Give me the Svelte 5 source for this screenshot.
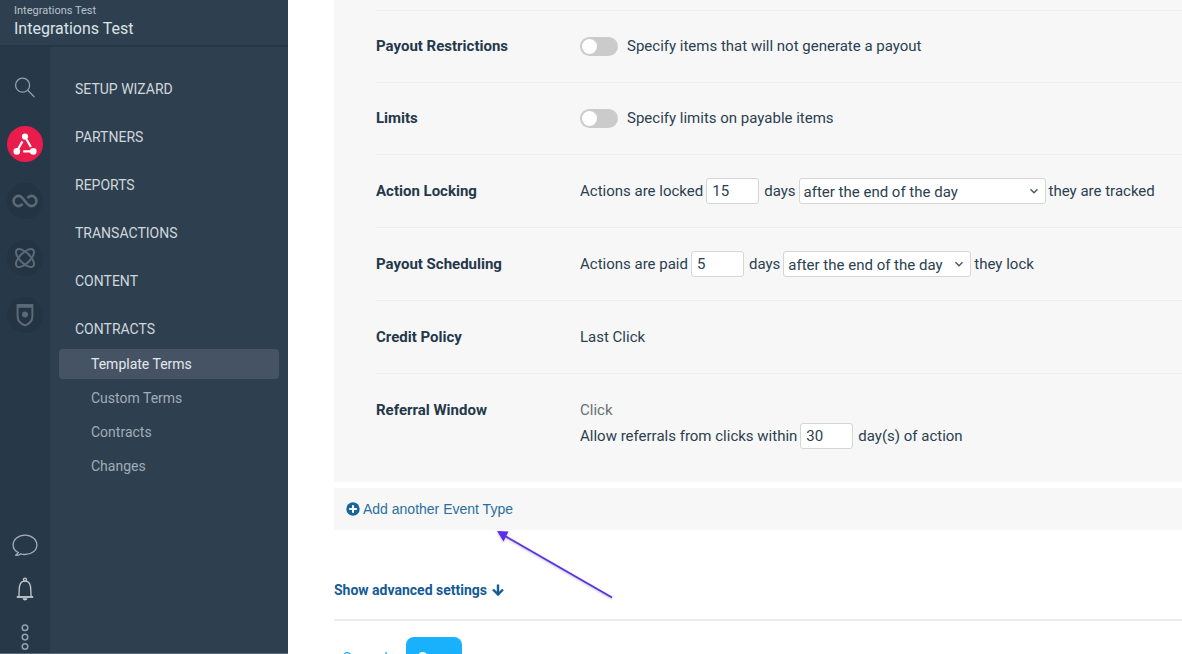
<script>
  const menu = ["Setup Wizard", "Partners", "Reports", "Transactions", "Content", "Contracts"];
  const submenu = ["Template Terms", "Custom Terms", "Contracts", "Changes"];
  const timing = ["after the end of the day", "after the end of the month"];

  let current = $state("Template Terms");
  let restrictPayout = $state(false);
  let limitItems = $state(false);
  let lockDays = $state("15");
  let lockFrom = $state(timing[0]);
  let payDays = $state("5");
  let payFrom = $state(timing[0]);
  let clickDays = $state("30");
</script>

{#snippet chevron()}
  <svg class="chevron" viewBox="0 0 10 10" aria-hidden="true"><path d="M1.5 3.2 5 6.8l3.5-3.6" /></svg>
{/snippet}

<div class="app">
  <aside class="sidebar">
    <header class="account">
      <small>Integrations Test</small>
      <strong>Integrations Test</strong>
    </header>

    <div class="sidebar-body">
      <div class="rail">
        <button aria-label="Search">
          <svg width="22" height="22" viewBox="0 0 22 22" fill="none" stroke="#94a2ae" stroke-width="1.3">
            <circle cx="8.6" cy="9.2" r="7" />
            <path d="m13.7 14.3 6.8 6.8" />
          </svg>
        </button>
        <button class="round active" aria-label="Performance">
          <svg width="36" height="36" viewBox="0 0 36 36" fill="#fff" stroke="#fff" stroke-width="2.2">
            <g stroke="none">
              <circle cx="18" cy="10.6" r="3.1" />
              <circle cx="9.8" cy="25.4" r="3.3" />
              <circle cx="26.3" cy="25.4" r="3.3" />
            </g>
            <path d="m15.4 15.4-4.4 7.8M19.3 13l4.6 8M16.2 25.4H25" />
          </svg>
        </button>
        <button class="round" aria-label="Optimize">
          <svg width="26" height="14" viewBox="0 0 26 14" fill="none" stroke="#5a6a78" stroke-width="2.6">
            <path d="M10.6 9.9C9.200 11.500 8.200 12.100 6.700 12.100a5.100 5.100 0 0 1 0-10.200c5.200 0 7.200 10.200 12.600 10.200a5.100 5.100 0 0 0 0-10.200c-1.700 0-2.700.7-3.900 2.100" />
          </svg>
        </button>
        <button class="round" aria-label="Discover">
          <svg width="22" height="22" viewBox="0 0 22 22" fill="none" stroke="#5a6a78" stroke-width="2">
            <ellipse cx="11" cy="11" rx="11.600" ry="5.200" transform="rotate(45 11 11)" />
            <ellipse cx="11" cy="11" rx="11.600" ry="5.200" transform="rotate(-45 11 11)" />
          </svg>
        </button>
        <button class="round" aria-label="Protect">
          <svg width="18" height="24" viewBox="0 0 18 24" fill="none" stroke="#5a6a78" stroke-width="2">
            <path d="M1.6 2.2h14.8v11c0 4.400-3.600 7.800-7.400 9.200-3.800-1.400-7.400-4.800-7.400-9.200z" />
            <path d="M1 3h16" stroke-width="3.500" />
            <circle cx="9" cy="11.500" r="3" fill="#5a6a78" stroke="none" />
          </svg>
        </button>

        <div class="rail-bottom">
          <button aria-label="Messages">
            <svg width="26" height="24" viewBox="0 0 26 24" fill="none" stroke="#a3adb9" stroke-width="1.300">
              <path d="M7 19.800C3.500 18.300 1.100 15.300 1.100 11.900c0-5.500 5.300-9.800 11.900-9.800s11.900 4.300 11.900 9.800S19.600 21.500 13 21.500c-1.600 0-3.100-.2-4.500-.6-1.500 1.200-3.500 1.700-5.200 1.500 1.500-.6 2.400-1.500 2.500-3.200" />
            </svg>
          </button>
          <button aria-label="Notifications">
            <svg width="18" height="24" viewBox="0 0 18 24" fill="none" stroke="#c3cad2" stroke-width="1.300">
              <circle cx="9" cy="2.600" r="1.500" />
              <path d="M2.800 19.500c.5-2.500.1-7.500.8-10.500C4.200 6 6.300 4.200 9 4.200s4.800 1.800 5.400 4.800c.7 3 .3 8 .8 10.500" />
              <path d="M.8 20h16.400" stroke-width="1.800" />
              <path d="M6.500 21.200h5c-.4 1.500-1.200 2.200-2.500 2.200s-2.100-.7-2.500-2.200z" fill="#c3cad2" stroke="none" />
            </svg>
          </button>
          <button aria-label="More">
            <svg width="10" height="32" viewBox="0 0 10 32" fill="none" stroke="#94a2b2" stroke-width="1.500">
              <circle cx="5" cy="6.700" r="2.800" />
              <circle cx="5" cy="16.100" r="2.800" />
              <circle cx="5" cy="25.500" r="2.800" />
            </svg>
          </button>
        </div>
      </div>

      <nav class="menu">
        {#each menu as item}
          <a class="menu-item" href="#menu">{item}</a>
        {/each}
        <div class="submenu">
          {#each submenu as item}
            <a href="#terms" class:selected={current === item} onclick={() => (current = item)}>{item}</a>
          {/each}
        </div>
      </nav>
    </div>
  </aside>

  <main>
    <section class="panel">
      <div class="row toggle-row">
        <h3>Payout Restrictions</h3>
        <label class="toggle">
          <input type="checkbox" bind:checked={restrictPayout} />
          Specify items that will not generate a payout
        </label>
      </div>
      <div class="row toggle-row">
        <h3>Limits</h3>
        <label class="toggle">
          <input type="checkbox" bind:checked={limitItems} />
          Specify limits on payable items
        </label>
      </div>
      <div class="row">
        <h3>Action Locking</h3>
        <div class="line">
          <label for="lock-days">Actions are locked</label>
          <input class="days" id="lock-days" type="text" bind:value={lockDays} />
          <label class="unit" for="lock-from">days</label>
          <span class="select wide">
            <select id="lock-from" bind:value={lockFrom}>
              {#each timing as option}<option>{option}</option>{/each}
            </select>
            {@render chevron()}
          </span>
          <span>they are tracked</span>
        </div>
      </div>
      <div class="row">
        <h3>Payout Scheduling</h3>
        <div class="line">
          <label for="pay-days">Actions are paid</label>
          <input class="days" id="pay-days" type="text" bind:value={payDays} />
          <label class="unit" for="pay-from">days</label>
          <span class="select">
            <select id="pay-from" bind:value={payFrom}>
              {#each timing as option}<option>{option}</option>{/each}
            </select>
            {@render chevron()}
          </span>
          <span>they lock</span>
        </div>
      </div>
      <div class="row">
        <h3>Credit Policy</h3>
        <div>Last Click</div>
      </div>
      <div class="row">
        <h3>Referral Window</h3>
        <div>
          <div class="muted">Click</div>
          <div class="line">
            <label for="click-days">Allow referrals from clicks within</label>
            <input class="days" id="click-days" type="text" bind:value={clickDays} />
            <span class="unit">day(s) of action</span>
          </div>
        </div>
      </div>
    </section>

    <div class="add-bar">
      <a href="#add">
        <svg width="14" height="14" viewBox="0 0 14 14" aria-hidden="true">
          <circle cx="7" cy="7" r="6.700" fill="#19659b" />
          <path d="M7 3.200v7.600M3.200 7h7.600" stroke="#fff" stroke-width="2" />
        </svg>
        Add another Event Type
      </a>
      <svg class="pointer" width="118" height="70" viewBox="0 0 118 70" aria-hidden="true">
        <path d="M8 5 115 66.500" stroke="#5a35e0" stroke-width="2" />
        <path d="M0 0 11.500 .5 6.500 10.500z" fill="#5a2ff0" />
      </svg>
    </div>

    <button class="advanced">
      Show advanced settings
      <svg width="12" height="12" viewBox="0 0 12 12" fill="none" stroke="#135a96" stroke-width="2.400" aria-hidden="true">
        <path d="M6 .5v10M1 5.500l5 5 5-5" />
      </svg>
    </button>

    <footer class="actions">
      <button class="cancel">Cancel</button>
      <button class="save">Save</button>
    </footer>
  </main>
</div>

<style>
  :global(body) {
    background: #fff;
    font-family: Roboto, "Liberation Sans", sans-serif;
    overflow: hidden;
  }

  .app {
    display: flex;
    height: 100vh;
    overflow: hidden;
    color: #2b3f50;
    font-size: 15px;
    line-height: 26px;
  }

  button {
    padding: 0;
    border: 0;
    background: none;
    font: inherit;
    cursor: pointer;
  }

  a {
    text-decoration: none;
  }

  /* sidebar */
  .sidebar {
    display: flex;
    flex: none;
    flex-direction: column;
    box-sizing: border-box;
    width: 288px;
    background: #2e404f;
    border-bottom: 1px solid #5a6c7c;
  }

  .account {
    display: flex;
    flex-direction: column;
    padding: 4px 14px 5px;
    border-bottom: 2px solid #263848;
    color: #dde2e7;
  }

  .account small {
    color: #b9c3cc;
    font-size: 11px;
    line-height: 14px;
  }

  .account strong {
    font-size: 16px;
    font-weight: 400;
    line-height: 22px;
  }

  .sidebar-body {
    display: flex;
    flex: 1;
  }

  .rail {
    display: flex;
    flex-direction: column;
    align-items: center;
    gap: 21px;
    width: 50px;
    padding-top: 22px;
    background: #273848;
  }

  .rail button {
    display: flex;
    align-items: center;
    justify-content: center;
    width: 36px;
    height: 36px;
  }

  .rail .round {
    border-radius: 50%;
    background: #243443;
  }

  .rail .active {
    background: #ea1c4c;
  }

  .rail-bottom {
    display: flex;
    flex-direction: column;
    gap: 20px;
    margin-top: auto;
  }

  .rail-bottom button {
    height: auto;
  }

  .menu {
    flex: 1;
    padding: 7px 9px;
  }

  .menu-item {
    display: block;
    margin-top: 22px;
    padding: 0 16px;
    color: #d0d7dd;
    font-size: 14px;
    text-transform: uppercase;
  }

  .submenu {
    margin-top: 7px;
  }

  .submenu a {
    display: block;
    margin-bottom: 4px;
    padding: 2px 32px;
    border-radius: 4px;
    color: #a0acb8;
    font-size: 14px;
  }

  .submenu .selected {
    background: #465364;
    color: #e4e8ec;
  }

  /* contract terms */
  main {
    flex: 1;
    min-width: 0;
    padding-left: 46px;
    white-space: nowrap;
  }

  .panel {
    padding: 10px 0 10px 42px;
    background: #f7f7f7;
  }

  .row {
    display: grid;
    grid-template-columns: 204px 1fr;
    padding: 23px 0;
    border-top: 1px solid #ededed;
  }

  .toggle-row {
    line-height: 25px;
  }

  h3 {
    margin: 0;
    color: #24384a;
    font-size: 15px;
    font-weight: 700;
  }

  .toggle {
    display: flex;
    align-items: center;
    gap: 9px;
  }

  .toggle input {
    display: flex;
    align-items: center;
    width: 38px;
    height: 19px;
    margin: 0;
    padding: 2px;
    border-radius: 10px;
    background: #cbcbcb;
    appearance: none;
  }

  .toggle input::before {
    content: "";
    width: 15px;
    height: 15px;
    border-radius: 50%;
    background: #fff;
  }

  .toggle input:checked {
    justify-content: flex-end;
    background: #19b1fb;
  }

  .line {
    display: flex;
    align-items: center;
    gap: 3px;
  }

  .unit {
    padding-left: 2px;
  }

  .days,
  select {
    box-sizing: border-box;
    height: 26px;
    padding: 0 5px;
    border: 1px solid #d4d6d8;
    border-radius: 3px;
    background: #fff;
    color: inherit;
    font: inherit;
  }

  .days {
    width: 53px;
  }

  .select {
    display: grid;
    align-items: center;
    width: 188px;
  }

  .select.wide {
    width: 247px;
  }

  .select > * {
    grid-area: 1 / 1;
  }

  select {
    width: 100%;
    padding: 0 4px;
    appearance: none;
  }

  .chevron {
    justify-self: end;
    width: 10px;
    margin-right: 7px;
    fill: none;
    stroke: #4a5560;
    stroke-width: 1.300;
    pointer-events: none;
  }

  .muted {
    color: #6b6f73;
  }

  .add-bar {
    position: relative;
    margin-top: 6px;
    padding: 8px 12px;
    background: #f7f7f7;
  }

  .add-bar a {
    display: flex;
    align-items: center;
    gap: 3px;
    color: #2a6f9f;
    font-family: "Liberation Sans", sans-serif;
    font-size: 14px;
  }

  .pointer {
    position: absolute;
    top: 43px;
    left: 163px;
    fill: none;
    filter: drop-shadow(0 1px 1px rgba(60, 40, 120, 0.3));
  }

  .advanced {
    display: flex;
    align-items: center;
    gap: 5px;
    margin: 47px 0 16px;
    color: #135a96;
    font-size: 14px;
    font-weight: 700;
  }

  .actions {
    display: flex;
    gap: 10px;
    padding-top: 16px;
    border-top: 2px solid #ececec;
    font-size: 15px;
  }

  .actions button {
    height: 42px;
    padding: 0 8px;
    border-radius: 8px;
    color: #19b1fb;
  }

  .actions .save {
    padding: 0 12px;
    background: #19b1fb;
    color: #fff;
    font-weight: 700;
  }
</style>
